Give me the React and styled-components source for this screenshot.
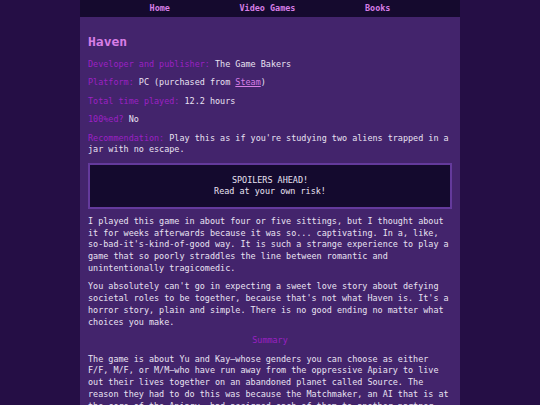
import React from "react";
import styled, { createGlobalStyle } from "styled-components";

const Global = createGlobalStyle`
  html, body { margin: 0; padding: 0; background: #250e45; }
  body { font-family: "DejaVu Sans Mono", "Liberation Mono", monospace; }
`;

const Column = styled.div`
  width: 380px;
  margin: 0 auto;
  min-height: 100vh;
  background: #43246c;
  color: #e9e2f2;
  font-size: 8.45px;
  line-height: 11.8px;
`;

const Nav = styled.nav`
  height: 17px;
  background: #150a2e;
  display: flex;
  justify-content: space-evenly;
  align-items: center;
`;

const NavLink = styled.a`
  color: #d77ee6;
  text-decoration: none;
  font-size: 8.45px;
  font-weight: bold;
`;

const Main = styled.main`
  padding: 0 8px 20px;
`;

const Title = styled.h1`
  margin: 0;
  padding-top: 17px;
  font-size: 13px;
  line-height: 16px;
  color: #d77ee6;
  font-weight: bold;
  margin-bottom: 9px;
`;

const P = styled.p`
  margin: 0 0 6.6px;
`;

const Label = styled.span`
  color: #9b20c3;
`;

const Link = styled.a`
  color: #d77ee6;
  text-decoration: underline;
`;

const Spoiler = styled.div`
  margin: 6px 0 7px;
  background: #140a2e;
  border: 2px solid #643a9c;
  padding: 10px 0;
  text-align: center;
  line-height: 11px;
`;

const Subhead = styled.h2`
  margin: 0 0 6.6px;
  font-size: 8.45px;
  line-height: 11.8px;
  font-weight: normal;
  text-align: center;
  color: #9b20c3;
`;

export default function App() {
  return (
    <>
      <Global />
      <Column>
        <Nav>
          <NavLink href="#">Home</NavLink>
          <NavLink href="#">Video Games</NavLink>
          <NavLink href="#">Books</NavLink>
        </Nav>
        <Main>
          <Title>Haven</Title>
          <P><Label>Developer and publisher:</Label> The Game Bakers</P>
          <P><Label>Platform:</Label> PC (purchased from <Link href="#">Steam</Link>)</P>
          <P><Label>Total time played:</Label> 12.2 hours</P>
          <P><Label>100%ed?</Label> No</P>
          <P><Label>Recommendation:</Label> Play this as if you're studying two aliens trapped in a jar with no escape.</P>
          <Spoiler>
            <div>SPOILERS AHEAD!</div>
            <div>Read at your own risk!</div>
          </Spoiler>
          <P>I played this game in about four or five sittings, but I thought about it for weeks afterwards because it was so... captivating. In a, like, so-bad-it's-kind-of-good way. It is such a strange experience to play a game that so poorly straddles the line between romantic and unintentionally tragicomedic.</P>
          <P>You absolutely can't go in expecting a sweet love story about defying societal roles to be together, because that's not what Haven is. It's a horror story, plain and simple. There is no good ending no matter what choices you make.</P>
          <Subhead>Summary</Subhead>
          <P>The game is about Yu and Kay—whose genders you can choose as either F/F, M/F, or M/M—who have run away from the oppressive Apiary to live out their lives together on an abandoned planet called Source. The reason they had to do this was because the Matchmaker, an AI that is at the core of the Apiary, had assigned each of them to another partner.</P>
        </Main>
      </Column>
    </>
  );
}
